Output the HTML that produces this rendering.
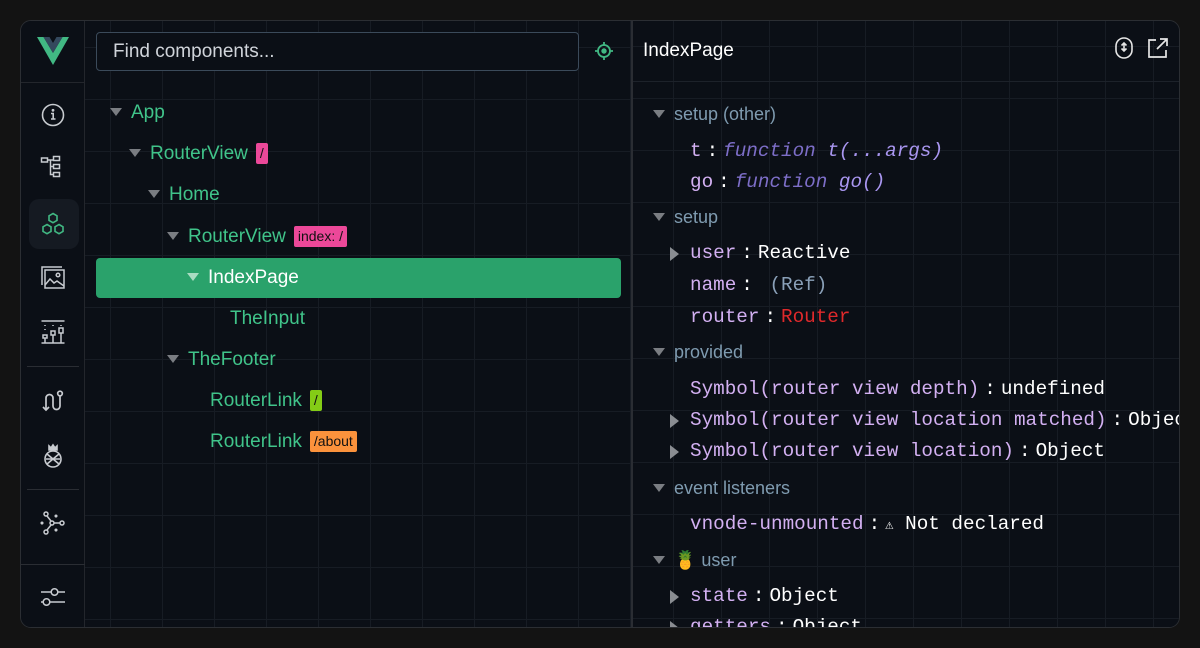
<!DOCTYPE html>
<html><head><meta charset="utf-8"><style>
*{box-sizing:border-box;margin:0;padding:0}
body{width:1200px;height:648px;background:#131313;overflow:hidden;font-family:"Liberation Sans",sans-serif;position:relative}
.panel{position:absolute;left:20px;top:20px;width:1160px;height:608px;border:1px solid #2b2e33;border-radius:11px;background:#0b0f16;overflow:hidden}
.side{position:absolute;left:0;top:0;width:64px;height:608px;border-right:1px solid #23262c;background:#0b0f16}
.tree{position:absolute;left:64px;top:0;width:546px;height:608px;background-color:#0b0f16;
background-image:linear-gradient(#171c24 1px,transparent 1px),linear-gradient(90deg,#171c24 1px,transparent 1px);background-size:52px 52px;background-position:-3px 26px,25px 0}
.right{position:absolute;left:610px;top:0;width:550px;height:608px;border-left:2px solid #2a2d33;
background-color:#0b0f16;background-image:linear-gradient(#171c24 1px,transparent 1px),linear-gradient(90deg,#171c24 1px,transparent 1px);background-size:48px 52px;background-position:0 25px,40px 0}
.ic{position:absolute;left:19px;width:26px;height:26px}
.sep{position:absolute;left:6px;width:52px;height:1px;background:#2a2d33}
.search{position:absolute;left:11px;top:11px;width:483px;height:39px;border:1px solid #3b4a5a;border-radius:4px;background:#0b0f16;color:#d0d4da;font-size:19px;padding:8px 16px}
.row{position:absolute;font-size:19px;color:#40c48a;height:24px;line-height:24px;white-space:nowrap}
.tri{display:inline-block;width:0;height:0;border-left:6px solid transparent;border-right:6px solid transparent;border-top:8px solid #7a7d82;margin-right:9px;vertical-align:2px}
.tag{display:inline-block;font-size:14px;color:#111;padding:0 4px;height:21px;line-height:21px;border-radius:2px;margin-left:8px;vertical-align:1px}
.sel{position:absolute;left:11px;top:237px;width:525px;height:40px;background:#2aa26b;border-radius:4px}
.hd{position:absolute;top:0;left:0;width:550px;height:61px;border-bottom:1px solid #1d222a}
.sec{position:absolute;left:20px;font-size:18px;color:#7f9bb0;height:24px;line-height:24px;white-space:nowrap}
.sec .tri{margin-right:9px}
.p{position:absolute;left:57px;font-family:"Liberation Mono",monospace;font-size:19.3px;height:24px;line-height:24px;white-space:nowrap;color:#fff}
.k{color:#d3b0f2}
.c{margin:0 5px}
.fn{color:#7d6ec8;font-style:italic}
.fv{color:#a996f0;font-style:italic}
.rt{position:absolute;left:-20px;top:6px;width:0;height:0;border-top:7px solid transparent;border-bottom:7px solid transparent;border-left:9px solid #8a8d92}
</style></head><body>
<div class="panel">
<div class="side">
<svg style="position:absolute;left:16px;top:16px" width="32" height="28" viewBox="0 0 32 28"><path d="M0 0h6.5L16 16 25.5 0H32L16 28z" fill="#41b883"/><path d="M6.5 0h6l3.5 6 3.5-6h6L16 16z" fill="#34495e"/></svg>
<div style="position:absolute;left:0;top:61px;width:64px;height:1px;background:#23262c"></div>
<svg class="ic" style="top:81px" viewBox="0 0 26 26" fill="none" stroke="#c8cbd0" stroke-width="1.6"><circle cx="13" cy="13" r="10.5"/><circle cx="13" cy="8.3" r="0.6" fill="#c8cbd0"/><path d="M11 11.5h2.2v5.5M11 17h4.5"/></svg>
<svg class="ic" style="top:134px" viewBox="0 0 26 26" fill="none" stroke="#c8cbd0" stroke-width="1.5"><rect x="1.5" y="3" width="6" height="4"/><rect x="13.5" y="1.5" width="6" height="4"/><rect x="13.5" y="9.5" width="6" height="4"/><rect x="13.5" y="17.5" width="6" height="4"/><path d="M7.5 5h6M10.5 5v14.5h3M10.5 11.5h3"/></svg>
<div style="position:absolute;left:8px;top:178px;width:50px;height:50px;border-radius:10px;background:#151a22"></div>
<svg class="ic" style="top:190px" viewBox="0 0 26 26" fill="none" stroke="#41b883" stroke-width="1.6"><path d="M13 2.5l4 2.3v4.6L13 11.7 9 9.4V4.8z"/><path d="M7 13.5l4 2.3v4.6L7 22.7 3 20.4v-4.6z"/><path d="M19 13.5l4 2.3v4.6L19 22.7 15 20.4v-4.6z"/></svg>
<svg class="ic" style="top:244px" viewBox="0 0 26 26" fill="none" stroke="#c8cbd0" stroke-width="1.5"><path d="M2 20V2h20"/><rect x="5" y="5" width="19" height="18"/><circle cx="18" cy="10" r="1.8"/><path d="M5 20l5-6 4 4 3-2 7 5"/></svg>
<svg class="ic" style="top:298px" viewBox="0 0 26 26" fill="none" stroke="#c8cbd0" stroke-width="1.5"><path d="M1.5 2h23M1.5 24h23M5 24v-5M13 24v-8M21 24v-10"/><rect x="3" y="16" width="4" height="3"/><rect x="11" y="12" width="4" height="4"/><rect x="19" y="9" width="4" height="5"/><path d="M5 6v1M5 10v1M13 6v1M21 6v1" /></svg>
<div class="sep" style="top:345px"></div>
<svg class="ic" style="top:367px" viewBox="0 0 26 26" fill="none" stroke="#c8cbd0" stroke-width="1.7"><path d="M6 22V10a3.5 3.5 0 0 1 7 0v8a3.5 3.5 0 0 0 7 0V8"/><circle cx="20" cy="5.5" r="2.3"/><path d="M3 19l3 3 3-3"/></svg>
<svg class="ic" style="top:422px" viewBox="0 0 26 26" fill="none" stroke="#c8cbd0" stroke-width="1.6"><path d="M9 3l2 2 2-3 2 3 2-2v4H9z" fill="#c8cbd0"/><ellipse cx="13" cy="16" rx="8" ry="8"/><path d="M7 11l12 10M19 11L7 21M6 16h14"/></svg>
<div class="sep" style="top:468px"></div>
<svg class="ic" style="top:489px" viewBox="0 0 26 26" fill="none" stroke="#c8cbd0" stroke-width="1.5"><circle cx="6" cy="4" r="2"/><circle cx="6" cy="22" r="2"/><circle cx="12" cy="13" r="2"/><circle cx="22" cy="13" r="2"/><path d="M7 6l4 5M7 20l4-5M14 13h6"/><circle cx="2" cy="13" r="0.8" fill="#c8cbd0"/><circle cx="16" cy="6" r="0.8" fill="#c8cbd0"/><circle cx="16" cy="20" r="0.8" fill="#c8cbd0"/></svg>
<div style="position:absolute;left:0;top:543px;width:64px;height:1px;background:#2a2d33"></div>
<svg class="ic" style="top:563px" viewBox="0 0 26 26" fill="none" stroke="#c8cbd0" stroke-width="1.5"><path d="M1 8h10M18 8h7M1 18h2M10 18h15"/><circle cx="14.5" cy="8" r="3.3"/><circle cx="6.5" cy="18" r="3.3"/></svg>
</div>
<div class="tree">
<div class="search">Find components...</div>
<svg style="position:absolute;left:509px;top:20px" width="20" height="20" viewBox="0 0 20 20" fill="none" stroke="#41b883" stroke-width="1.8"><circle cx="10" cy="10" r="6"/><circle cx="10" cy="10" r="1.8" fill="#41b883"/><path d="M10 1v3M10 16v3M1 10h3M16 10h3"/></svg>
<div class="sel"></div>
<div class="row" style="left:25px;top:80px"><span class="tri"></span>App</div>
<div class="row" style="left:44px;top:121px"><span class="tri"></span>RouterView<span class="tag" style="background:#ec4899">/</span></div>
<div class="row" style="left:63px;top:162px"><span class="tri"></span>Home</div>
<div class="row" style="left:82px;top:204px"><span class="tri"></span>RouterView<span class="tag" style="background:#ec4899">index: /</span></div>
<div class="row" style="left:102px;top:245px;color:#fff"><span class="tri" style="border-top-color:#a9dcc2"></span>IndexPage</div>
<div class="row" style="left:145px;top:286px">TheInput</div>
<div class="row" style="left:82px;top:327px"><span class="tri"></span>TheFooter</div>
<div class="row" style="left:125px;top:368px">RouterLink<span class="tag" style="background:#84cc16">/</span></div>
<div class="row" style="left:125px;top:409px">RouterLink<span class="tag" style="background:#fb923c">/about</span></div>
</div>
<div class="right">
<div class="hd"></div>
<div style="position:absolute;left:10px;top:19px;font-size:19px;color:#fff">IndexPage</div>
<svg style="position:absolute;left:481px;top:16px" width="20" height="22" viewBox="0 0 20 22" fill="none" stroke="#e6e6e6" stroke-width="1.6"><rect x="2" y="1" width="16" height="20" rx="8"/><path d="M10 6v8M7.5 8.5L10 6l2.5 2.5M7.5 11.5L10 14l2.5-2.5"/></svg>
<svg style="position:absolute;left:514px;top:16px" width="22" height="22" viewBox="0 0 22 22" fill="none" stroke="#e6e6e6" stroke-width="1.7"><path d="M9 3H2v17h17v-7M13 2h7v7M20 2L10 12"/></svg>
<div class="sec" style="top:81px"><span class="tri"></span>setup (other)</div>
<div class="p" style="top:118px"><span class="k">t</span><span class="c">:</span><span class="fn">function</span> <span class="fv">t(...args)</span></div>
<div class="p" style="top:149px"><span class="k">go</span><span class="c">:</span><span class="fn">function</span> <span class="fv">go()</span></div>
<div class="sec" style="top:184px"><span class="tri"></span>setup</div>
<div class="p" style="top:220px"><span class="rt"></span><span class="k">user</span><span class="c">:</span>Reactive</div>
<div class="p" style="top:252px"><span class="k">name</span><span class="c">:</span> <span style="color:#8aa0b8">(Ref)</span></div>
<div class="p" style="top:284px"><span class="k">router</span><span class="c">:</span><span style="color:#e0292b">Router</span></div>
<div class="sec" style="top:319px"><span class="tri"></span>provided</div>
<div class="p" style="top:356px"><span class="k">Symbol(router view depth)</span><span class="c">:</span>undefined</div>
<div class="p" style="top:387px"><span class="rt"></span><span class="k">Symbol(router view location matched)</span><span class="c">:</span>Object</div>
<div class="p" style="top:418px"><span class="rt"></span><span class="k">Symbol(router view location)</span><span class="c">:</span>Object</div>
<div class="sec" style="top:455px"><span class="tri"></span>event listeners</div>
<div class="p" style="top:491px"><span class="k">vnode-unmounted</span><span class="c">:</span><span style="font-size:14px">⚠</span> Not declared</div>
<div class="sec" style="top:527px"><span class="tri"></span><span style="color:#e0a040">🍍</span> user</div>
<div class="p" style="top:563px"><span class="rt"></span><span class="k">state</span><span class="c">:</span>Object</div>
<div class="p" style="top:594px"><span class="rt"></span><span class="k">getters</span><span class="c">:</span>Object</div>
</div>
</div>
</body></html>
